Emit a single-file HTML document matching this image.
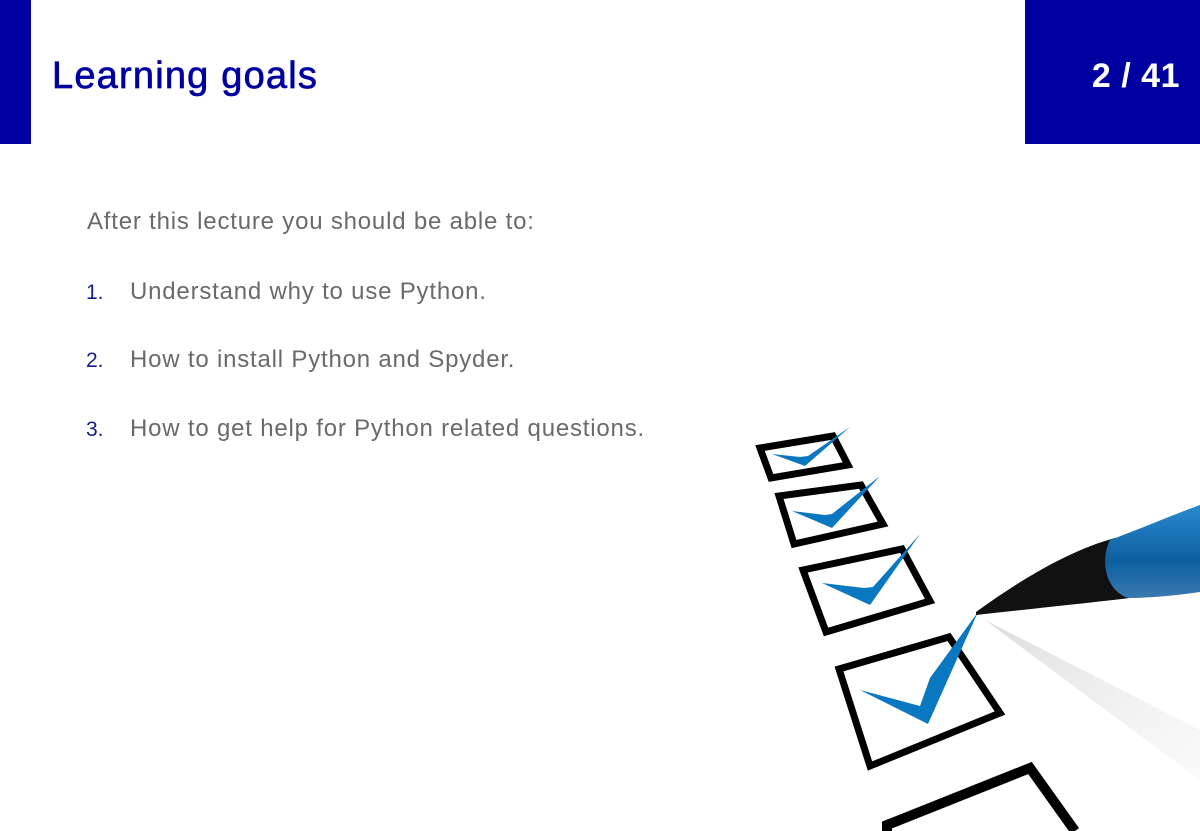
<!DOCTYPE html>
<html><head><meta charset="utf-8"><style>
html,body{margin:0;padding:0;background:#fff;width:1200px;height:831px;overflow:hidden;position:relative;font-family:"Liberation Sans",sans-serif}
.lb{position:absolute;left:0;top:0;width:31px;height:144px;background:#0000a0}
.rb{position:absolute;left:1025px;top:0;width:175px;height:144px;background:#0000a0}
.title{position:absolute;left:52px;top:55px;font-size:38px;color:#0000a0;letter-spacing:1.2px;-webkit-text-stroke:0.7px #0000a0}
.pg{position:absolute;right:20px;top:57px;font-size:34px;color:#fff;font-weight:bold;letter-spacing:0.5px}
.t{position:absolute;font-size:24px;color:#6a6a6a;letter-spacing:0.8px}
.n{position:absolute;font-size:21px;color:#1a1a8a;left:86px}
</style></head><body>
<div class="lb"></div><div class="rb"></div>
<div class="title">Learning goals</div>
<div class="pg">2 / 41</div>
<div class="t" style="left:87px;top:208px">After this lecture you should be able to:</div>
<div class="n" style="top:281px">1.</div><div class="t" style="left:130px;top:278px">Understand why to use Python.</div>
<div class="n" style="top:349px">2.</div><div class="t" style="left:130px;top:346px">How to install Python and Spyder.</div>
<div class="n" style="top:418px">3.</div><div class="t" style="left:130px;top:415px">How to get help for Python related questions.</div>
<svg width="1200" height="831" style="position:absolute;left:0;top:0">
<defs>
<linearGradient id="sh" x1="0" y1="0" x2="1" y2="1"><stop offset="0" stop-color="#ddd"/><stop offset="1" stop-color="#eee" stop-opacity="0.3"/></linearGradient>
<linearGradient id="bl" x1="0" y1="0" x2="0" y2="1"><stop offset="0" stop-color="#2a8ad0"/><stop offset="0.6" stop-color="#0d5fa0"/><stop offset="1" stop-color="#3a7ab0"/></linearGradient>
</defs>
<polygon points="985,620 1200,730 1200,780" fill="url(#sh)"/>
<g fill="none" stroke="#000" stroke-width="7" stroke-linejoin="miter">
<polygon points="760,448 833,436 848,465 771,478"/>
<polygon points="779,496 861,485 883,524 794,544"/>
<polygon points="803,570 902,549 930,601 826,632"/>
<polygon points="839,669 949,637 1000,713 870,766"/>
<polyline points="887,831 887,825 1030,768 1075,831" stroke-width="10"/>
</g>
<g fill="#0a78c0">
<path d="M772,454 L805,466 L850,427 L808,456 L800,457 Z"/>
<path d="M792,511 L832,528 L880,476 L832,514 L825,515 Z"/>
<path d="M822,583 L870,605 L920,534 L873,587 L864,588 Z"/>
<path d="M860,690 L928,724 L978,612 L930,678 L920,706 Z"/>
</g>
<path d="M976,612 C1020,580 1070,550 1115,538 L1130,598 C1070,605 1020,610 976,615 Z" fill="#111"/>
<path d="M1110,540 C1150,525 1180,512 1200,505 L1200,592 C1180,595 1150,598 1128,598 C1105,590 1100,560 1110,540 Z" fill="url(#bl)"/>
</svg>
</body></html>
